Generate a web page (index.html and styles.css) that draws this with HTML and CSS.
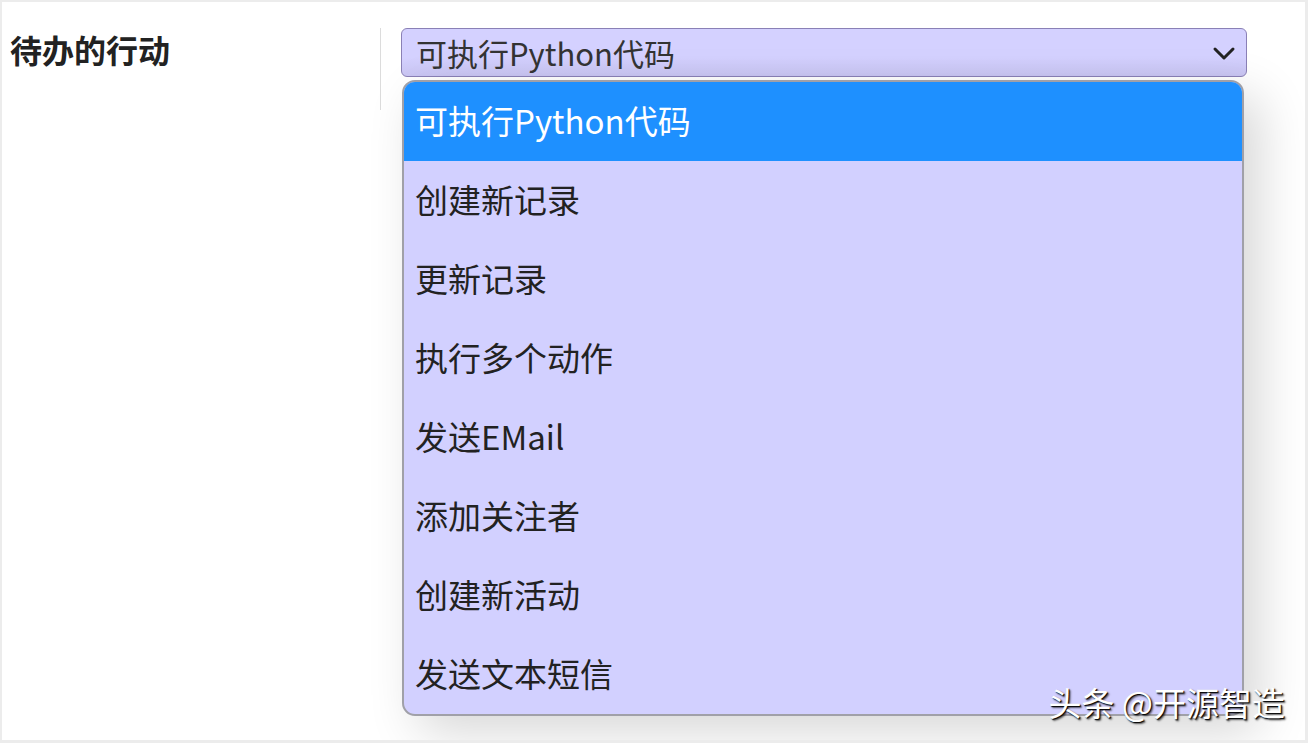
FILE: index.html
```html
<!DOCTYPE html>
<html lang="zh-CN">
<head>
  <meta charset="UTF-8" />
  <title>待办的行动</title>
  <link rel="stylesheet" href="styles.css">
</head>
<body>

  <div class="frame">
    <div class="row">
      <div class="label">待办的行动</div>
      <div class="divider"></div>
      <div class="field">
        <div class="select">
          <span>可执行Python代码</span>
          <svg class="chevron" width="24" height="16" viewBox="0 0 24 16">
            <path d="M3 4 L12 13 L21 4" fill="none" stroke="#222" stroke-width="3" stroke-linecap="round" stroke-linejoin="round"/>
          </svg>
        </div>
        <ul class="list">
          <li class="item active">可执行Python代码</li>
          <li class="item">创建新记录</li>
          <li class="item">更新记录</li>
          <li class="item">执行多个动作</li>
          <li class="item">发送EMail</li>
          <li class="item">添加关注者</li>
          <li class="item">创建新活动</li>
          <li class="item">发送文本短信</li>
        </ul>
      </div>
    </div>
    <div class="watermark">头条 @开源智造</div>
  </div>

</body>
</html>
```

FILE: styles.css
```css
body {
        margin: 0;
        padding: 0;
        font-family: "Noto Sans CJK SC", "Liberation Sans", sans-serif;
        background: #ececec;
    }
    .frame {
        position: relative;
        box-sizing: border-box;
        width: 1303px;
        height: 738px;
        margin: 2px 0 0 2px;
        background: white;
        overflow: hidden;
    }
    .row {
        display: flex;
        align-items: flex-start;
        padding-top: 26px;
    }
    .label {
        width: 370px;
        padding-left: 8px;
        margin-top: -3px;
        font-size: 32px;
        font-weight: bold;
        color: #222;
        line-height: 48px;
    }
    .divider {
        width: 1px;
        height: 82px;
        background: #dcdcdc;
    }
    .field {
        margin-left: 20px;
        width: 846px;
    }
    .select {
        box-sizing: border-box;
        height: 49px;
        display: flex;
        align-items: center;
        justify-content: space-between;
        padding: 0 10px 0 14px;
        border: 1.5px solid #8a80b6;
        border-radius: 6px;
        background: linear-gradient(#d4d1ff 60%, #c9c5f2);
        font-size: 31px;
        line-height: 44px;
        color: #333;
    }
    .list {
        list-style: none;
        margin: 3px 0 0 1px;
        padding: 0;
        width: 842px;
        box-sizing: border-box;
        border: 2px solid #a0a0a8;
        border-radius: 13px;
        overflow: hidden;
        background: #d2d0ff;
        box-shadow: 16px 16px 50px rgba(0,0,0,0.16);
    }
    .item {
        height: 79px;
        display: flex;
        align-items: center;
        padding: 0 0 4px 11px;
        box-sizing: border-box;
        font-size: 33px;
        color: #222;
    }
    .item.active {
        background: #1e90ff;
        color: white;
    }
    .watermark {
        position: absolute;
        right: 20px;
        bottom: 14px;
        font-size: 33px;
        color: white;
        text-shadow: 1px 1px 1px #000, 2px 2px 2px rgba(0,0,0,0.6);
    }
```
